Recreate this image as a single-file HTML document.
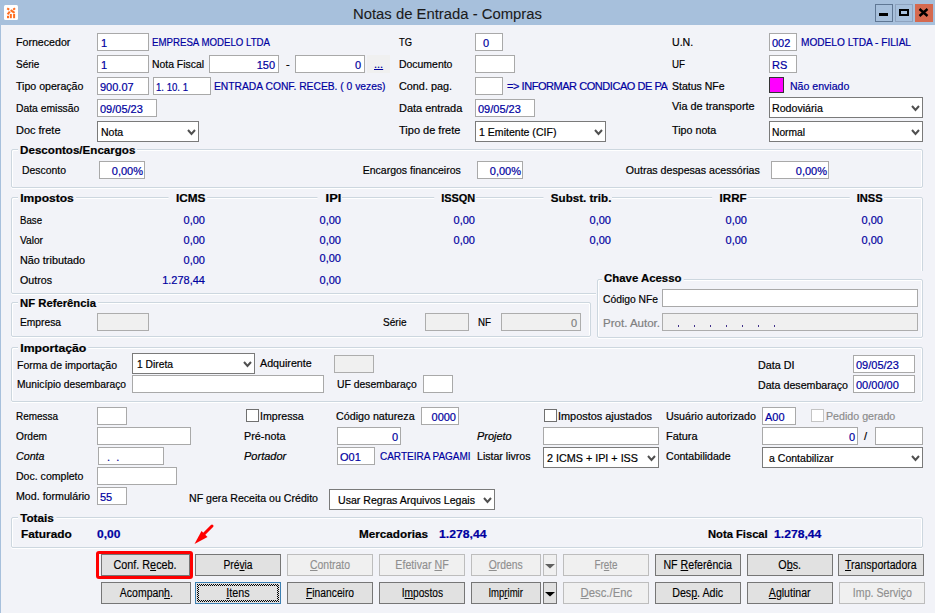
<!DOCTYPE html><html><head><meta charset="utf-8"><style>
*{margin:0;padding:0;box-sizing:border-box}
html,body{width:935px;height:613px;overflow:hidden;background:#f2f3f8;font-family:"Liberation Sans",sans-serif;}
.a{position:absolute}
.t,.v,.b,.title{position:absolute;white-space:pre;font-size:11px;line-height:13px;color:#000;-webkit-text-stroke:0.2px currentColor}
.title{-webkit-text-stroke:0.1px currentColor}
.b{font-weight:bold}
.gt{background:#f2f3f8;padding:0 2px;margin-left:-2px}
.gh{background:#f2f3f8;padding:0 1px 0 7px;margin-right:-1px}
.it{font-style:italic}
.title{font-size:15.5px;line-height:18px;color:#1b1b1b}
.inp{background:#fff;border:1px solid #a9a9a9}
.inp.dis{background:#f0f0f0;border-color:#adadad}
.sel{background:#fff;border:1px solid #7a7a7a}
.grp{border:1px solid #cdd7df;border-radius:2px;box-shadow:inset 1px 1px 0 #fff,inset -1px 0 0 #fff,0 1px 0 #fff}
.btn{background:#e1e1e1;border:1px solid #767676}
.btn.dis{background:#f0f0f0;border-color:#bdbdbd}
.btn.foc{border-color:#3c7fb1}
.bt{text-align:center;font-size:12px;line-height:14px;color:#000;white-space:pre;-webkit-text-stroke:0.15px currentColor}
.bt span{display:inline-block}
.bt.dis{color:#8f8f8f}
</style></head><body>
<div class="a" style="left:0px;top:0px;width:935px;height:25px;background:#a7c0dc;"></div>
<div class="a" style="left:0px;top:25px;width:1px;height:588px;background:#a7c0dc;"></div>
<svg class="a" style="left:4px;top:5px" width="14" height="15"><rect x="0" y="0" width="14" height="15" rx="1.5" fill="#fff"/><g stroke="#ff6d1f" stroke-width="2" fill="none"><path d="M3.2 3.4 L5.2 4.6"/><path d="M6.6 5.2 L10.6 7.8"/><path d="M11 3.2 L9.2 4.8"/><path d="M5.8 6.6 L3.6 9.4"/></g><g fill="#ff6d1f"><rect x="3" y="10.8" width="2" height="2.4"/><rect x="5.8" y="9" width="2" height="4.2"/><rect x="9.1" y="9" width="2" height="4.2"/></g></svg>
<div class="title" style="top:5px;left:353px;transform:scaleX(0.9579);transform-origin:left top;">Notas de Entrada - Compras</div>
<div class="a" style="left:875px;top:4px;width:18px;height:18px;border:1px solid #5f7794;"></div>
<div class="a" style="left:879px;top:13px;width:9px;height:3px;background:#000;"></div>
<div class="a" style="left:895px;top:4px;width:18px;height:18px;border:1px solid #8ea3bf;"></div>
<div class="a" style="left:899px;top:9px;width:10px;height:7px;border:2px solid #000;"></div>
<div class="a" style="left:915px;top:4px;width:18px;height:18px;background:#d5694f;"></div>
<svg class="a" style="left:918px;top:8px" width="11" height="9"><path d="M1.5 1 L9.5 8 M9.5 1 L1.5 8" stroke="#000" stroke-width="2.4"/></svg>
<div class="t" style="top:36px;left:16px;transform:scaleX(0.9668);transform-origin:left top;">Fornecedor</div>
<div class="a inp" style="left:97px;top:33px;width:52px;height:18px;"></div>
<div class="v" style="top:37px;left:101px;color:#0000a0;">1</div>
<div class="t" style="top:36px;left:152px;transform:scaleX(0.8788);transform-origin:left top;color:#0000a0;">EMPRESA MODELO LTDA</div>
<div class="t" style="top:36px;left:399px;transform:scaleX(0.8507);transform-origin:left top;">TG</div>
<div class="a inp" style="left:475px;top:33px;width:28px;height:18px;"></div>
<div class="v" style="top:37px;left:483px;color:#0000a0;">0</div>
<div class="t" style="top:36px;left:672px;transform:scaleX(0.9636);transform-origin:left top;">U.N.</div>
<div class="a inp" style="left:769px;top:33px;width:28px;height:18px;"></div>
<div class="v" style="top:37px;left:772px;color:#0000a0;">002</div>
<div class="t" style="top:36px;left:801px;transform:scaleX(0.9197);transform-origin:left top;color:#0000a0;">MODELO LTDA - FILIAL</div>
<div class="t" style="top:58px;left:16px;transform:scaleX(0.9109);transform-origin:left top;">Série</div>
<div class="a inp" style="left:97px;top:55px;width:52px;height:18px;"></div>
<div class="v" style="top:59px;left:101px;color:#0000a0;">1</div>
<div class="t" style="top:58px;left:152px;transform:scaleX(0.9449);transform-origin:left top;">Nota Fiscal</div>
<div class="a inp" style="left:209px;top:55px;width:70px;height:18px;"></div>
<div class="v" style="top:59px;right:660px;color:#0000a0;">150</div>
<div class="t" style="top:58px;left:286px;">-</div>
<div class="a inp" style="left:295px;top:55px;width:70px;height:18px;"></div>
<div class="v" style="top:59px;right:574px;color:#0000a0;">0</div>
<div class="a" style="left:367px;top:55px;width:23px;height:18px;background:#f0f0f0;"></div>
<div class="t" style="top:58px;left:374px;color:#0000a0;text-decoration:underline;">...</div>
<div class="t" style="top:58px;left:399px;transform:scaleX(0.9491);transform-origin:left top;">Documento</div>
<div class="a inp" style="left:475px;top:55px;width:40px;height:18px;"></div>
<div class="t" style="top:58px;left:672px;transform:scaleX(0.8860);transform-origin:left top;">UF</div>
<div class="a inp" style="left:769px;top:55px;width:28px;height:18px;"></div>
<div class="v" style="top:59px;left:772px;color:#0000a0;">RS</div>
<div class="t" style="top:80px;left:16px;transform:scaleX(0.9639);transform-origin:left top;">Tipo operação</div>
<div class="a inp" style="left:97px;top:77px;width:52px;height:18px;"></div>
<div class="v" style="top:81px;left:100px;color:#0000a0;">900.07</div>
<div class="a inp" style="left:153px;top:77px;width:58px;height:18px;"></div>
<div class="v" style="top:81px;left:156px;transform:scaleX(0.8719);transform-origin:left top;color:#0000a0;">1. 10. 1</div>
<div class="t" style="top:80px;left:214px;transform:scaleX(0.9352);transform-origin:left top;color:#0000a0;">ENTRADA CONF. RECEB. ( 0 vezes)</div>
<div class="t" style="top:80px;left:399px;transform:scaleX(0.9846);transform-origin:left top;">Cond. pag.</div>
<div class="a inp" style="left:475px;top:77px;width:28px;height:18px;"></div>
<div class="t" style="left:507px;top:80px;width:161px;overflow:hidden;color:#0000a0;letter-spacing:-0.45px">=&gt; INFORMAR CONDICAO DE PAGAMENTO</div>
<div class="t" style="top:80px;left:672px;transform:scaleX(0.9558);transform-origin:left top;">Status NFe</div>
<div class="a" style="left:769px;top:77px;width:15px;height:16px;background:#ff00ff;border:1px solid #333;"></div>
<div class="t" style="top:80px;left:790px;transform:scaleX(0.9598);transform-origin:left top;color:#0000a0;">Não enviado</div>
<div class="t" style="top:102px;left:16px;transform:scaleX(0.9410);transform-origin:left top;">Data emissão</div>
<div class="a inp" style="left:97px;top:99px;width:60px;height:18px;"></div>
<div class="v" style="top:103px;left:100px;color:#0000a0;">09/05/23</div>
<div class="t" style="top:102px;left:399px;transform:scaleX(0.9951);transform-origin:left top;">Data entrada</div>
<div class="a inp" style="left:475px;top:99px;width:60px;height:18px;"></div>
<div class="v" style="top:103px;left:478px;color:#0000a0;">09/05/23</div>
<div class="t" style="top:100px;left:672px;transform:scaleX(0.9883);transform-origin:left top;">Via de transporte</div>
<div class="a sel" style="left:769px;top:97px;width:154px;height:21px;"></div>
<svg class="a" style="left:911px;top:105px" width="9" height="7"><path d="M1 1 L4.5 5 L8 1" stroke="#505050" stroke-width="2" fill="none"/></svg>
<div class="v" style="top:102px;left:772px;transform:scaleX(0.9659);transform-origin:left top;color:#000;">Rodoviária</div>
<div class="t" style="top:124px;left:16px;transform:scaleX(0.9968);transform-origin:left top;">Doc frete</div>
<div class="a sel" style="left:97px;top:121px;width:102px;height:21px;"></div>
<svg class="a" style="left:187px;top:129px" width="9" height="7"><path d="M1 1 L4.5 5 L8 1" stroke="#505050" stroke-width="2" fill="none"/></svg>
<div class="v" style="top:126px;left:101px;transform:scaleX(0.9548);transform-origin:left top;color:#000;">Nota</div>
<div class="t" style="top:124px;left:399px;transform:scaleX(1.0007);transform-origin:left top;">Tipo de frete</div>
<div class="a sel" style="left:475px;top:121px;width:131px;height:21px;"></div>
<svg class="a" style="left:594px;top:129px" width="9" height="7"><path d="M1 1 L4.5 5 L8 1" stroke="#505050" stroke-width="2" fill="none"/></svg>
<div class="v" style="top:126px;left:479px;transform:scaleX(0.9593);transform-origin:left top;color:#000;">1 Emitente (CIF)</div>
<div class="t" style="top:124px;left:672px;transform:scaleX(0.9743);transform-origin:left top;">Tipo nota</div>
<div class="a sel" style="left:769px;top:121px;width:154px;height:21px;"></div>
<svg class="a" style="left:911px;top:129px" width="9" height="7"><path d="M1 1 L4.5 5 L8 1" stroke="#505050" stroke-width="2" fill="none"/></svg>
<div class="v" style="top:126px;left:772px;transform:scaleX(0.9308);transform-origin:left top;color:#000;">Normal</div>
<div class="a grp" style="left:11px;top:149px;width:912px;height:39px;"></div>
<div class="b gt" style="top:144px;left:20px;transform:scaleX(1.0536);transform-origin:left top;">Descontos/Encargos</div>
<div class="t" style="top:164px;left:22px;transform:scaleX(0.9466);transform-origin:left top;">Desconto</div>
<div class="a inp" style="left:99px;top:161px;width:46px;height:18px;"></div>
<div class="v" style="top:165px;right:792px;color:#0000a0;">0,00%</div>
<div class="t" style="top:164px;right:474px;transform:scaleX(0.9539);transform-origin:right top;">Encargos financeiros</div>
<div class="a inp" style="left:477px;top:161px;width:46px;height:18px;"></div>
<div class="v" style="top:165px;right:414px;color:#0000a0;">0,00%</div>
<div class="t" style="top:164px;right:175px;transform:scaleX(0.9654);transform-origin:right top;">Outras despesas acessórias</div>
<div class="a inp" style="left:771px;top:161px;width:58px;height:18px;"></div>
<div class="v" style="top:165px;right:108px;color:#0000a0;">0,00%</div>
<div class="a grp" style="left:11px;top:197px;width:912px;height:97px;"></div>
<div class="b gt" style="top:192px;left:20px;transform:scaleX(1.0963);transform-origin:left top;">Impostos</div>
<div class="b gh" style="top:192px;right:730px;transform:scaleX(1.0704);transform-origin:right top;">ICMS</div>
<div class="b gh" style="top:192px;right:594px;transform:scaleX(1.1653);transform-origin:right top;">IPI</div>
<div class="b gh" style="top:192px;right:460px;transform:scaleX(0.9945);transform-origin:right top;">ISSQN</div>
<div class="b gh" style="top:192px;right:324px;transform:scaleX(1.0542);transform-origin:right top;">Subst. trib.</div>
<div class="b gh" style="top:192px;right:188px;transform:scaleX(1.0543);transform-origin:right top;">IRRF</div>
<div class="b gh" style="top:192px;right:52px;transform:scaleX(1.0093);transform-origin:right top;">INSS</div>
<div class="t" style="top:214px;left:20px;transform:scaleX(0.8773);transform-origin:left top;">Base</div>
<div class="t" style="top:234px;left:20px;transform:scaleX(0.9246);transform-origin:left top;">Valor</div>
<div class="t" style="top:254px;left:20px;transform:scaleX(0.9841);transform-origin:left top;">Não tributado</div>
<div class="t" style="top:274px;left:20px;transform:scaleX(0.9692);transform-origin:left top;">Outros</div>
<div class="v" style="top:214px;right:730px;color:#0000a0;">0,00</div>
<div class="v" style="top:234px;right:730px;color:#0000a0;">0,00</div>
<div class="v" style="top:254px;right:730px;color:#0000a0;">0,00</div>
<div class="v" style="top:274px;right:730px;color:#0000a0;">1.278,44</div>
<div class="v" style="top:214px;right:594px;color:#0000a0;">0,00</div>
<div class="v" style="top:234px;right:594px;color:#0000a0;">0,00</div>
<div class="v" style="top:252px;right:594px;color:#0000a0;">0,00</div>
<div class="v" style="top:274px;right:594px;color:#0000a0;">0,00</div>
<div class="v" style="top:214px;right:460px;color:#0000a0;">0,00</div>
<div class="v" style="top:234px;right:460px;color:#0000a0;">0,00</div>
<div class="v" style="top:214px;right:324px;color:#0000a0;">0,00</div>
<div class="v" style="top:234px;right:324px;color:#0000a0;">0,00</div>
<div class="v" style="top:214px;right:188px;color:#0000a0;">0,00</div>
<div class="v" style="top:234px;right:188px;color:#0000a0;">0,00</div>
<div class="v" style="top:214px;right:52px;color:#0000a0;">0,00</div>
<div class="v" style="top:234px;right:52px;color:#0000a0;">0,00</div>
<div class="a grp" style="left:11px;top:302px;width:580px;height:35px;"></div>
<div class="b gt" style="top:297px;left:20px;transform:scaleX(1.0258);transform-origin:left top;">NF Referência</div>
<div class="t" style="top:316px;left:20px;transform:scaleX(0.9312);transform-origin:left top;">Empresa</div>
<div class="a inp dis" style="left:97px;top:313px;width:52px;height:18px;"></div>
<div class="t" style="top:316px;left:383px;transform:scaleX(0.9148);transform-origin:left top;">Série</div>
<div class="a inp dis" style="left:425px;top:313px;width:44px;height:18px;"></div>
<div class="t" style="top:316px;left:478px;transform:scaleX(0.8860);transform-origin:left top;">NF</div>
<div class="a inp dis" style="left:501px;top:313px;width:80px;height:18px;"></div>
<div class="v" style="top:317px;right:358px;color:#808080;">0</div>
<div class="a" style="left:596px;top:271px;width:328px;height:68px;background:#f2f3f8;"></div>
<div class="a grp" style="left:597px;top:279px;width:326px;height:59px;"></div>
<div class="b gt" style="top:272px;left:604px;transform:scaleX(1.0341);transform-origin:left top;">Chave Acesso</div>
<div class="t" style="top:293px;left:603px;transform:scaleX(0.9369);transform-origin:left top;">Código NFe</div>
<div class="a inp" style="left:662px;top:289px;width:256px;height:18px;"></div>
<div class="t" style="top:317px;left:603px;transform:scaleX(1.0474);transform-origin:left top;color:#808080;">Prot. Autor.</div>
<div class="a inp dis" style="left:662px;top:313px;width:256px;height:18px;"></div>
<div class="a" style="left:678px;top:325px;width:1px;height:2px;background:#40308a;"></div>
<div class="a" style="left:694px;top:325px;width:1px;height:2px;background:#40308a;"></div>
<div class="a" style="left:710px;top:325px;width:1px;height:2px;background:#40308a;"></div>
<div class="a" style="left:726px;top:325px;width:1px;height:2px;background:#40308a;"></div>
<div class="a" style="left:742px;top:325px;width:1px;height:2px;background:#40308a;"></div>
<div class="a" style="left:758px;top:325px;width:1px;height:2px;background:#40308a;"></div>
<div class="a" style="left:774px;top:325px;width:1px;height:2px;background:#40308a;"></div>
<div class="a grp" style="left:11px;top:347px;width:912px;height:55px;"></div>
<div class="b gt" style="top:342px;left:20px;transform:scaleX(1.1154);transform-origin:left top;">Importação</div>
<div class="t" style="top:359px;left:17px;transform:scaleX(0.9565);transform-origin:left top;">Forma de importação</div>
<div class="a sel" style="left:132px;top:353px;width:123px;height:21px;"></div>
<svg class="a" style="left:243px;top:361px" width="9" height="7"><path d="M1 1 L4.5 5 L8 1" stroke="#505050" stroke-width="2" fill="none"/></svg>
<div class="v" style="top:358px;left:137px;transform:scaleX(0.9343);transform-origin:left top;color:#000;">1 Direta</div>
<div class="t" style="top:357px;left:260px;transform:scaleX(0.9715);transform-origin:left top;">Adquirente</div>
<div class="a inp dis" style="left:334px;top:355px;width:40px;height:18px;"></div>
<div class="t" style="top:378px;left:17px;transform:scaleX(0.9332);transform-origin:left top;">Município desembaraço</div>
<div class="a inp" style="left:132px;top:375px;width:192px;height:18px;"></div>
<div class="t" style="top:378px;left:337px;transform:scaleX(0.9446);transform-origin:left top;">UF desembaraço</div>
<div class="a inp" style="left:423px;top:375px;width:30px;height:18px;"></div>
<div class="t" style="top:359px;left:758px;transform:scaleX(0.9786);transform-origin:left top;">Data DI</div>
<div class="a inp" style="left:853px;top:355px;width:62px;height:18px;"></div>
<div class="v" style="top:359px;left:856px;color:#0000a0;">09/05/23</div>
<div class="t" style="top:379px;left:758px;transform:scaleX(0.9682);transform-origin:left top;">Data desembaraço</div>
<div class="a inp" style="left:853px;top:375px;width:62px;height:18px;"></div>
<div class="v" style="top:379px;left:856px;color:#0000a0;">00/00/00</div>
<div class="t" style="top:410px;left:16px;transform:scaleX(0.9038);transform-origin:left top;">Remessa</div>
<div class="a inp" style="left:97px;top:407px;width:30px;height:18px;"></div>
<div class="t" style="top:430px;left:16px;transform:scaleX(0.9219);transform-origin:left top;">Ordem</div>
<div class="a inp" style="left:97px;top:427px;width:94px;height:18px;"></div>
<div class="t it" style="top:450px;left:16px;transform:scaleX(0.9707);transform-origin:left top;">Conta</div>
<div class="a inp" style="left:98px;top:447px;width:66px;height:18px;"></div>
<div class="v" style="top:451px;left:107px;color:#0000a0;">.&nbsp;&nbsp;.</div>
<div class="t" style="top:470px;left:16px;transform:scaleX(0.9586);transform-origin:left top;">Doc. completo</div>
<div class="a inp" style="left:97px;top:467px;width:80px;height:18px;"></div>
<div class="t" style="top:490px;left:16px;transform:scaleX(0.9683);transform-origin:left top;">Mod. formulário</div>
<div class="a inp" style="left:97px;top:487px;width:30px;height:18px;"></div>
<div class="v" style="top:491px;left:100px;color:#0000a0;">55</div>
<div class="a" style="left:246px;top:409px;width:13px;height:13px;border:1px solid #707070;background:#fff;"></div>
<div class="t" style="top:410px;left:260px;transform:scaleX(0.9657);transform-origin:left top;">Impressa</div>
<div class="t" style="top:430px;left:244px;transform:scaleX(0.9810);transform-origin:left top;">Pré-nota</div>
<div class="t it" style="top:450px;left:244px;transform:scaleX(1.0023);transform-origin:left top;">Portador</div>
<div class="t" style="top:410px;left:336px;transform:scaleX(0.9736);transform-origin:left top;">Código natureza</div>
<div class="a inp" style="left:421px;top:407px;width:38px;height:18px;"></div>
<div class="v" style="top:411px;right:479px;color:#0000a0;">0000</div>
<div class="a inp" style="left:337px;top:427px;width:64px;height:18px;"></div>
<div class="v" style="top:431px;right:537px;color:#0000a0;">0</div>
<div class="a inp" style="left:337px;top:447px;width:38px;height:18px;"></div>
<div class="v" style="top:451px;left:340px;color:#0000a0;">O01</div>
<div class="t" style="top:450px;left:380px;transform:scaleX(0.9074);transform-origin:left top;color:#0000a0;">CARTEIRA PAGAMI</div>
<div class="t" style="top:492px;left:189px;transform:scaleX(0.9634);transform-origin:left top;">NF gera Receita ou Crédito</div>
<div class="a sel" style="left:329px;top:489px;width:166px;height:21px;"></div>
<svg class="a" style="left:483px;top:497px" width="9" height="7"><path d="M1 1 L4.5 5 L8 1" stroke="#505050" stroke-width="2" fill="none"/></svg>
<div class="v" style="top:494px;left:338px;transform:scaleX(0.9616);transform-origin:left top;color:#000;">Usar Regras Arquivos Legais</div>
<div class="a" style="left:544px;top:409px;width:13px;height:13px;border:1px solid #707070;background:#fff;"></div>
<div class="t" style="top:410px;left:558px;transform:scaleX(0.9918);transform-origin:left top;">Impostos ajustados</div>
<div class="t it" style="top:430px;left:477px;transform:scaleX(0.9926);transform-origin:left top;">Projeto</div>
<div class="a inp" style="left:543px;top:427px;width:116px;height:18px;"></div>
<div class="t" style="top:450px;left:477px;transform:scaleX(0.9618);transform-origin:left top;">Listar livros</div>
<div class="a sel" style="left:543px;top:447px;width:116px;height:21px;"></div>
<svg class="a" style="left:647px;top:455px" width="9" height="7"><path d="M1 1 L4.5 5 L8 1" stroke="#505050" stroke-width="2" fill="none"/></svg>
<div class="v" style="top:452px;left:547px;transform:scaleX(0.9792);transform-origin:left top;color:#000;">2 ICMS + IPI + ISS</div>
<div class="t" style="top:410px;left:666px;transform:scaleX(0.9746);transform-origin:left top;">Usuário autorizado</div>
<div class="a inp" style="left:762px;top:407px;width:34px;height:18px;"></div>
<div class="v" style="top:411px;left:765px;color:#0000a0;">A00</div>
<div class="a" style="left:811px;top:409px;width:13px;height:13px;border:1px solid #c4c4c4;background:#fff;"></div>
<div class="t" style="top:410px;left:826px;transform:scaleX(0.9684);transform-origin:left top;color:#8c8c8c;">Pedido gerado</div>
<div class="t" style="top:430px;left:666px;transform:scaleX(0.9938);transform-origin:left top;">Fatura</div>
<div class="a inp" style="left:762px;top:427px;width:96px;height:18px;"></div>
<div class="v" style="top:431px;right:80px;color:#0000a0;">0</div>
<div class="t" style="top:430px;left:864px;">/</div>
<div class="a inp" style="left:875px;top:427px;width:48px;height:18px;"></div>
<div class="t" style="top:450px;left:666px;transform:scaleX(0.9601);transform-origin:left top;">Contabilidade</div>
<div class="a sel" style="left:762px;top:447px;width:161px;height:21px;"></div>
<svg class="a" style="left:911px;top:455px" width="9" height="7"><path d="M1 1 L4.5 5 L8 1" stroke="#505050" stroke-width="2" fill="none"/></svg>
<div class="v" style="top:452px;left:769px;transform:scaleX(0.9574);transform-origin:left top;color:#000;">a Contabilizar</div>
<div class="a grp" style="left:11px;top:517px;width:912px;height:31px;"></div>
<div class="b gt" style="top:512px;left:20px;transform:scaleX(1.0681);transform-origin:left top;">Totais</div>
<div class="b" style="top:528px;left:21px;transform:scaleX(1.0794);transform-origin:left top;">Faturado</div>
<div class="b" style="top:528px;left:97px;transform:scaleX(1.0877);transform-origin:left top;color:#0000a0;">0,00</div>
<div class="b" style="top:528px;left:359px;transform:scaleX(1.0646);transform-origin:left top;">Mercadorias</div>
<div class="b" style="top:528px;left:439px;transform:scaleX(1.1091);transform-origin:left top;color:#0000a0;">1.278,44</div>
<div class="b" style="top:528px;left:708px;transform:scaleX(1.0173);transform-origin:left top;">Nota Fiscal</div>
<div class="b" style="top:528px;left:774px;transform:scaleX(1.1044);transform-origin:left top;color:#0000a0;">1.278,44</div>
<div class="a btn" style="left:101px;top:554px;width:89px;height:22px"></div>
<div class="a bt " style="left:101px;top:558px;width:89px;"><span style="transform:scaleX(0.8992);">Conf. R<u>e</u>ceb.</span></div>
<div class="a btn" style="left:195px;top:554px;width:86px;height:22px"></div>
<div class="a bt " style="left:195px;top:558px;width:86px;"><span style="transform:scaleX(0.8522);">Pré<u>v</u>ia</span></div>
<div class="a btn dis" style="left:287px;top:554px;width:86px;height:22px"></div>
<div class="a bt  dis" style="left:287px;top:558px;width:86px;"><span style="transform:scaleX(0.8690);"><u>C</u>ontrato</span></div>
<div class="a btn dis" style="left:379px;top:554px;width:86px;height:22px"></div>
<div class="a bt  dis" style="left:379px;top:558px;width:86px;"><span style="transform:scaleX(0.8879);">Efetivar <u>N</u>F</span></div>
<div class="a btn dis" style="left:471px;top:554px;width:70px;height:22px"></div>
<div class="a bt  dis" style="left:471px;top:558px;width:70px;"><span style="transform:scaleX(0.8635);"><u>O</u>rdens</span></div>
<div class="a btn dis" style="left:563px;top:554px;width:86px;height:22px"></div>
<div class="a bt  dis" style="left:563px;top:558px;width:86px;"><span style="transform:scaleX(0.8205);">Fr<u>e</u>te</span></div>
<div class="a btn" style="left:655px;top:554px;width:86px;height:22px"></div>
<div class="a bt " style="left:655px;top:558px;width:86px;"><span style="transform:scaleX(0.8851);">NF <u>R</u>eferência</span></div>
<div class="a btn" style="left:747px;top:554px;width:86px;height:22px"></div>
<div class="a bt " style="left:747px;top:558px;width:86px;"><span style="transform:scaleX(0.8985);">O<u>b</u>s.</span></div>
<div class="a btn" style="left:838px;top:554px;width:86px;height:22px"></div>
<div class="a bt " style="left:838px;top:558px;width:86px;"><span style="transform:scaleX(0.8774);"><u>T</u>ransportadora</span></div>
<div class="a btn" style="left:101px;top:582px;width:90px;height:22px"></div>
<div class="a bt " style="left:101px;top:586px;width:90px;"><span style="transform:scaleX(0.8727);">Acompan<u>h</u>.</span></div>
<div class="a btn foc" style="left:195px;top:582px;width:86px;height:22px"></div>
<div class="a bt  foc" style="left:195px;top:586px;width:86px;"><span style="transform:scaleX(0.8951);"><u>I</u>tens</span></div>
<div class="a btn" style="left:287px;top:582px;width:86px;height:22px"></div>
<div class="a bt " style="left:287px;top:586px;width:86px;"><span style="transform:scaleX(0.8564);"><u>F</u>inanceiro</span></div>
<div class="a btn" style="left:379px;top:582px;width:86px;height:22px"></div>
<div class="a bt " style="left:379px;top:586px;width:86px;"><span style="transform:scaleX(0.8480);">I<u>m</u>postos</span></div>
<div class="a btn" style="left:471px;top:582px;width:70px;height:22px"></div>
<div class="a bt " style="left:471px;top:586px;width:70px;"><span style="transform:scaleX(0.7960);">Imp<u>r</u>imir</span></div>
<div class="a btn dis" style="left:563px;top:582px;width:86px;height:22px"></div>
<div class="a bt  dis" style="left:563px;top:586px;width:86px;"><span style="transform:scaleX(0.9433);"><u>D</u>esc./Enc</span></div>
<div class="a btn" style="left:655px;top:582px;width:86px;height:22px"></div>
<div class="a bt " style="left:655px;top:586px;width:86px;"><span style="transform:scaleX(0.8886);">Des<u>p</u>. Adic</span></div>
<div class="a btn" style="left:747px;top:582px;width:86px;height:22px"></div>
<div class="a bt " style="left:747px;top:586px;width:86px;"><span style="transform:scaleX(0.8802);"><u>A</u>glutinar</span></div>
<div class="a btn dis" style="left:839px;top:582px;width:86px;height:22px"></div>
<div class="a bt  dis" style="left:839px;top:586px;width:86px;"><span style="transform:scaleX(0.8845);">Imp. Servi<u>ç</u>o</span></div>
<svg class="a" style="left:197px;top:584px" width="82" height="18"><path d="M0 0h1v1h-1zM2 0h1v1h-1zM4 0h1v1h-1zM6 0h1v1h-1zM8 0h1v1h-1zM10 0h1v1h-1zM12 0h1v1h-1zM14 0h1v1h-1zM16 0h1v1h-1zM18 0h1v1h-1zM20 0h1v1h-1zM22 0h1v1h-1zM24 0h1v1h-1zM26 0h1v1h-1zM28 0h1v1h-1zM30 0h1v1h-1zM32 0h1v1h-1zM34 0h1v1h-1zM36 0h1v1h-1zM38 0h1v1h-1zM40 0h1v1h-1zM42 0h1v1h-1zM44 0h1v1h-1zM46 0h1v1h-1zM48 0h1v1h-1zM50 0h1v1h-1zM52 0h1v1h-1zM54 0h1v1h-1zM56 0h1v1h-1zM58 0h1v1h-1zM60 0h1v1h-1zM62 0h1v1h-1zM64 0h1v1h-1zM66 0h1v1h-1zM68 0h1v1h-1zM70 0h1v1h-1zM72 0h1v1h-1zM74 0h1v1h-1zM76 0h1v1h-1zM78 0h1v1h-1zM80 0h1v1h-1zM1 1h1v1h-1zM3 1h1v1h-1zM5 1h1v1h-1zM7 1h1v1h-1zM9 1h1v1h-1zM11 1h1v1h-1zM13 1h1v1h-1zM15 1h1v1h-1zM17 1h1v1h-1zM19 1h1v1h-1zM21 1h1v1h-1zM23 1h1v1h-1zM25 1h1v1h-1zM27 1h1v1h-1zM29 1h1v1h-1zM31 1h1v1h-1zM33 1h1v1h-1zM35 1h1v1h-1zM37 1h1v1h-1zM39 1h1v1h-1zM41 1h1v1h-1zM43 1h1v1h-1zM45 1h1v1h-1zM47 1h1v1h-1zM49 1h1v1h-1zM51 1h1v1h-1zM53 1h1v1h-1zM55 1h1v1h-1zM57 1h1v1h-1zM59 1h1v1h-1zM61 1h1v1h-1zM63 1h1v1h-1zM65 1h1v1h-1zM67 1h1v1h-1zM69 1h1v1h-1zM71 1h1v1h-1zM73 1h1v1h-1zM75 1h1v1h-1zM77 1h1v1h-1zM79 1h1v1h-1zM81 1h1v1h-1zM0 2h1v1h-1zM80 2h1v1h-1zM1 3h1v1h-1zM81 3h1v1h-1zM0 4h1v1h-1zM80 4h1v1h-1zM1 5h1v1h-1zM81 5h1v1h-1zM0 6h1v1h-1zM80 6h1v1h-1zM1 7h1v1h-1zM81 7h1v1h-1zM0 8h1v1h-1zM80 8h1v1h-1zM1 9h1v1h-1zM81 9h1v1h-1zM0 10h1v1h-1zM80 10h1v1h-1zM1 11h1v1h-1zM81 11h1v1h-1zM0 12h1v1h-1zM80 12h1v1h-1zM1 13h1v1h-1zM81 13h1v1h-1zM0 14h1v1h-1zM80 14h1v1h-1zM1 15h1v1h-1zM81 15h1v1h-1zM0 16h1v1h-1zM2 16h1v1h-1zM4 16h1v1h-1zM6 16h1v1h-1zM8 16h1v1h-1zM10 16h1v1h-1zM12 16h1v1h-1zM14 16h1v1h-1zM16 16h1v1h-1zM18 16h1v1h-1zM20 16h1v1h-1zM22 16h1v1h-1zM24 16h1v1h-1zM26 16h1v1h-1zM28 16h1v1h-1zM30 16h1v1h-1zM32 16h1v1h-1zM34 16h1v1h-1zM36 16h1v1h-1zM38 16h1v1h-1zM40 16h1v1h-1zM42 16h1v1h-1zM44 16h1v1h-1zM46 16h1v1h-1zM48 16h1v1h-1zM50 16h1v1h-1zM52 16h1v1h-1zM54 16h1v1h-1zM56 16h1v1h-1zM58 16h1v1h-1zM60 16h1v1h-1zM62 16h1v1h-1zM64 16h1v1h-1zM66 16h1v1h-1zM68 16h1v1h-1zM70 16h1v1h-1zM72 16h1v1h-1zM74 16h1v1h-1zM76 16h1v1h-1zM78 16h1v1h-1zM80 16h1v1h-1zM1 17h1v1h-1zM3 17h1v1h-1zM5 17h1v1h-1zM7 17h1v1h-1zM9 17h1v1h-1zM11 17h1v1h-1zM13 17h1v1h-1zM15 17h1v1h-1zM17 17h1v1h-1zM19 17h1v1h-1zM21 17h1v1h-1zM23 17h1v1h-1zM25 17h1v1h-1zM27 17h1v1h-1zM29 17h1v1h-1zM31 17h1v1h-1zM33 17h1v1h-1zM35 17h1v1h-1zM37 17h1v1h-1zM39 17h1v1h-1zM41 17h1v1h-1zM43 17h1v1h-1zM45 17h1v1h-1zM47 17h1v1h-1zM49 17h1v1h-1zM51 17h1v1h-1zM53 17h1v1h-1zM55 17h1v1h-1zM57 17h1v1h-1zM59 17h1v1h-1zM61 17h1v1h-1zM63 17h1v1h-1zM65 17h1v1h-1zM67 17h1v1h-1zM69 17h1v1h-1zM71 17h1v1h-1zM73 17h1v1h-1zM75 17h1v1h-1zM77 17h1v1h-1zM79 17h1v1h-1zM81 17h1v1h-1z" fill="#000" shape-rendering="crispEdges"/></svg>
<div class="a btn dis" style="left:543px;top:554px;width:14px;height:22px"></div>
<svg class="a" style="left:545px;top:564px" width="10" height="5"><path d="M0 0 H10 L5 4.5z" fill="#606060"/></svg>
<div class="a btn" style="left:543px;top:582px;width:14px;height:22px"></div>
<svg class="a" style="left:545px;top:592px" width="10" height="5"><path d="M0 0 H10 L5 4.5z" fill="#000"/></svg>
<div class="a" style="left:96px;top:551px;width:97px;height:28px;border:3px solid #f00;border-radius:3px;"></div>
<svg class="a" style="left:190px;top:522px" width="26" height="26"><path d="M22 4 L12 14" stroke="#f00" stroke-width="3" stroke-linecap="round"/><path d="M4.5 22 L11.5 9 L17.5 15z" fill="#f00"/></svg>
</body></html>
